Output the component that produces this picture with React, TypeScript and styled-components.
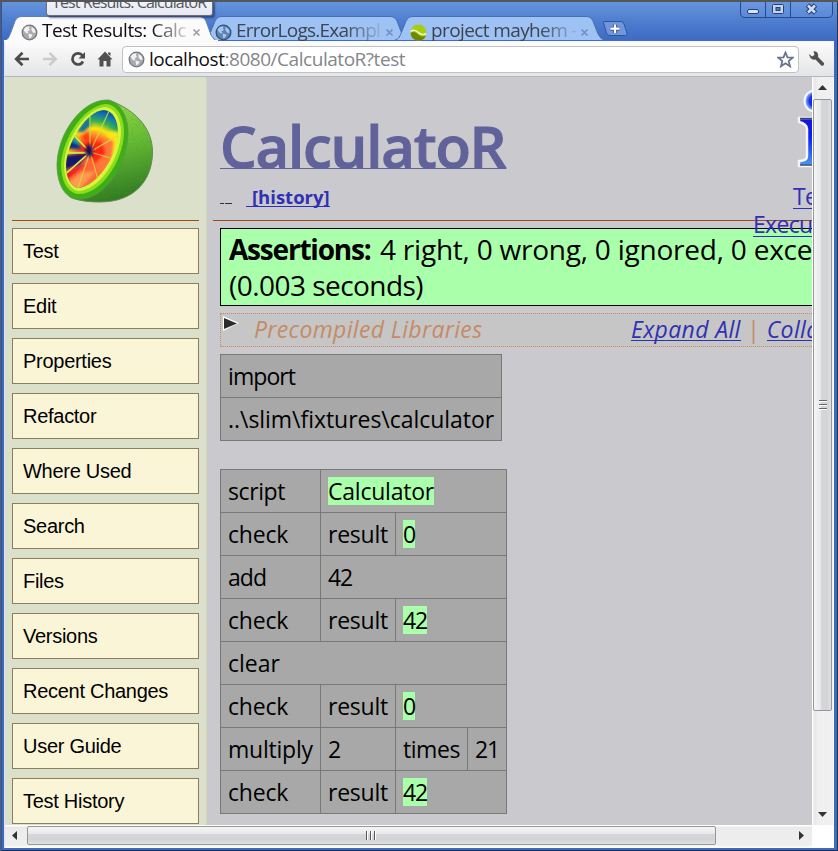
import React from "react";
import styled, { createGlobalStyle, css } from "styled-components";

const GlobalStyle = createGlobalStyle`
  * { box-sizing: border-box; }
  body { margin: 0; overflow: hidden; background: #23262c; }
`;

const ui = `"Open Sans", "Noto Sans", sans-serif`;

/* ---------- window frame ---------- */

const Window = styled.div`
  width: 838px;
  height: 851px;
  display: flex;
  flex-direction: column;
  padding: 0 4px 3px 4px;
  border-top: 2px solid #55565a;
  background: linear-gradient(#6494dd 0, #4a78cc 24px, #3c69c2 41px, #3c6bc4 100%);
  box-shadow: inset 1px 0 #545d70, inset 2px 0 #31549d, inset -1px 0 #2b3344, inset 0 -1px #1f2c4d;
  font-family: ${ui};
  overflow: hidden;
  position: relative;
`;

const TitleBar = styled.header`
  height: 39px;
  flex: none;
  display: flex;
  align-items: flex-end;
  position: relative;
`;

const Tooltip = styled.div`
  position: absolute;
  left: 46px;
  top: -2px;
  width: 167px;
  height: 16px;
  border: 1px solid #6d6f78;
  border-top: 0;
  border-radius: 0 0 3px 3px;
  background: linear-gradient(#f3f4fa, #e6e8f3);
  box-shadow: 2px 2px 2px rgba(20, 30, 70, 0.55);
  overflow: hidden;
  z-index: 3;
  display: flex;
  align-items: flex-end;
  padding: 0 0 4px 5px;
  color: #55565c;
  font-size: 16px;
  line-height: 18px;
  letter-spacing: -0.9px;
  white-space: nowrap;
`;

const TabStrip = styled.div`
  display: flex;
  align-items: flex-end;
`;

const TabBox = styled.div<{ $active?: boolean; $w: number; $pad: number }>`
  position: relative;
  width: ${(p) => p.$w}px;
  height: ${(p) => (p.$active ? 25 : 24)}px;
  margin-bottom: ${(p) => (p.$active ? 0 : 1)}px;
  margin-left: ${(p) => (p.$active ? 0 : -14)}px;
  z-index: ${(p) => (p.$active ? 2 : 1)};
  display: flex;
  align-items: center;
  padding-left: ${(p) => p.$pad}px;
  gap: 4px;
`;

const TabShape = styled.svg`
  position: absolute;
  inset: 0;
  z-index: -1;
  overflow: visible;
`;

const TabTitle = styled.span<{ $ls: number; $w: number; $active?: boolean }>`
  width: ${(p) => p.$w}px;
  overflow: hidden;
  white-space: nowrap;
  font-size: 19px;
  line-height: 26px;
  margin-top: 3px;
  letter-spacing: ${(p) => p.$ls}px;
  color: ${(p) => (p.$active ? "#101014" : "#3c4450")};
  mask-image: linear-gradient(90deg, #000 75%, rgba(0, 0, 0, 0.1) 100%);
`;

const Glyph = styled.svg<{ $top?: number }>`
  flex: none;
  display: block;
  margin-top: ${(p) => p.$top ?? 0}px;
`;

const NewTab = styled.svg`
  margin: 0 0 4px -3px;
`;

const WindowButtons = styled.svg`
  margin-left: auto;
  align-self: flex-start;
  margin-right: 1px;
`;

const Toolbar = styled.nav`
  height: 36px;
  flex: none;
  display: flex;
  align-items: center;
  background: linear-gradient(#fbfbfb, #e4e5e6);
  border-bottom: 1px solid #b5b7bf;
  border-left: 1px solid #dfe6f2;
  border-top: 1px solid #f6f8fc;
  padding: 0 8px 0 9px;
`;

const AddressBar = styled.div`
  width: 677px;
  height: 27px;
  margin-left: 9px;
  border: 1px solid #bfc1c3;
  border-radius: 4px;
  background: #fff;
  display: flex;
  align-items: center;
  padding: 0 4px 0 5px;
`;

const Url = styled.div`
  font-size: 19px;
  line-height: 25px;
  letter-spacing: -0.46px;
  color: #85868a;
  margin: 0 auto 0 4px;
  & b { font-weight: 400; color: #101010; }
`;

/* ---------- page ---------- */

const Viewport = styled.div`
  flex: 1;
  min-height: 0;
  display: grid;
  grid-template-columns: 807px 22px;
  grid-template-rows: 748px 22px;
  background: #fff;
  border-left: 1px solid #dfe2e6;
`;

const Page = styled.div`
  display: grid;
  grid-template-columns: 202px 605px;
  overflow: hidden;
  width: 807px;
  background: #cac9ce;
`;

const Sidebar = styled.aside`
  background: #dae0c9;
  border-right: 1px dotted #c9c9a6;
  padding: 0 7px;
  overflow: hidden;
`;

const LogoArea = styled.div`
  height: 144px;
  border-bottom: 1px solid #a04c10;
  padding: 22px 0 0 44px;
  margin-bottom: 7px;
`;

const NavButton = styled.a`
  display: block;
  height: 46px;
  margin-bottom: 9px;
  padding-left: 10px;
  border: 1px solid #8c7d5d;
  background: #faf5d7;
  font: 20px/44px "Liberation Sans", Arial, sans-serif;
  letter-spacing: -0.28px;
  color: #000;
`;

const Main = styled.main`
  position: relative;
  overflow: hidden;
  padding-left: 6px;
`;

const Header = styled.div`
  height: 144px;
  border-bottom: 1px solid #a04c10;
  padding: 0 0 0 7px;
  overflow: hidden;
`;

const Title = styled.h1`
  display: block;
  width: 286px;
  height: 54px;
  margin: 38px 0 0;
  font-size: 58px;
  font-weight: 600;
  line-height: 61px;
  letter-spacing: -1.2px;
  color: #62629b;
  white-space: nowrap;
  border-bottom: 1px solid #62629b;
  -webkit-text-stroke: 1px #62629b;
`;

const Crumbs = styled.div`
  display: flex;
  margin-top: 18px;
  height: 24px;
`;

const CrumbDash = styled.svg`
  margin: 16px 14px 0 0;
`;

const History = styled.a`
  height: 20px;
  padding-left: 6px;
  border-bottom: 1px solid #3030b4;
  font-size: 18.5px;
  font-weight: 700;
  line-height: 20px;
  color: #3030b4;
`;

const Content = styled.div`
  padding-left: 7px;
`;

const Assertions = styled.div`
  width: 640px;
  height: 78px;
  margin-top: 7px;
  padding: 2px 8px;
  border: 1px solid #000;
  background: #aaffaa;
  font-size: 28px;
  line-height: 36px;
  color: #000;
  white-space: nowrap;
  letter-spacing: -0.22px;
`;

const AssertLabel = styled.b`
  display: inline-block;
  width: 151px;
  letter-spacing: -1.2px;
`;

const AssertTime = styled.div`
  letter-spacing: -0.54px;
`;

const Collapsible = styled.div`
  width: 700px;
  height: 34px;
  margin: 7px 0;
  border: 1px dotted #cc8860;
  background: #c6c6c6;
  display: flex;
  padding-left: 1px;
  color: #c58b66;
  font-size: 23px;
  font-style: italic;
  line-height: 31px;
  letter-spacing: 0.35px;
  white-space: nowrap;
`;

const CollapsibleTitle = styled.span`
  width: 377px;
  margin-left: 15px;
`;

const Link = styled.a`
  height: 27px;
  color: #3030b4;
  border-bottom: 1px solid #3030b4;
`;

const Divider = styled.span`
  font-style: normal;
  width: 26px;
  text-align: center;
`;

const DecisionTable = styled.table<{ $w: number }>`
  width: ${(p) => p.$w}px;
  table-layout: fixed;
  border-collapse: collapse;
  margin-bottom: 28px;
  background: #a8a8a8;
  font-size: 23px;
  line-height: 28px;
  color: #000;
`;

const Row = styled.tr`
  height: 43px;
`;

const Cell = styled.td<{ $ls?: number }>`
  border: 1px solid #787878;
  padding: 0 0 1px 7px;
  letter-spacing: ${(p) => p.$ls ?? -0.22}px;
  white-space: nowrap;
`;

const Pass = styled.span`
  display: block;
  width: fit-content;
  height: 28px;
  background: #aaffaa;
`;

const Execution = styled.div`
  position: absolute;
  top: 14px;
  left: 546px;
  width: 150px;
  color: #3030b4;
  font-size: 23px;
  line-height: 27px;
  white-space: nowrap;
  letter-spacing: -0.7px;
`;

const ExecIcon = styled.svg`
  display: block;
  margin: -1px 0 14px 44px;
`;

const ExecLine = styled.div<{ $indent: number }>`
  width: fit-content;
  height: 26px;
  margin: 0 0 2px ${(p) => p.$indent}px;
  border-bottom: 1px solid #3030b4;
`;

/* ---------- scrollbars ---------- */

const VScroll = styled.div`
  display: flex;
  flex-direction: column;
  align-items: center;
  background: linear-gradient(90deg, #fff 1px, #e6e6e6 2px, #efefef 6px, #f1f1f1);
  border-right: 1px solid #fafafa;
`;

const HScroll = styled.div`
  display: flex;
  align-items: center;
  width: 807px;
  background: linear-gradient(#fff 1px, #e8e8e8 2px, #ededed 6px, #efefef);
  border-bottom: 1px solid #fafafa;
`;

const Thumb = styled.div<{ $vertical?: boolean }>`
  display: flex;
  align-items: center;
  justify-content: center;
  border: 1px solid #979797;
  border-radius: 2px;
  ${(p) =>
    p.$vertical
      ? css`
          width: 19px;
          height: 612px;
          background: linear-gradient(90deg, #f5f5f5, #e9e9eb 38%, #d6d7da 42%, #d2d3d6 75%, #e0e0e2);
        `
      : css`
          width: 689px;
          height: 19px;
          background: linear-gradient(#f5f5f5, #e9e9eb 38%, #d6d7da 42%, #d2d3d6 75%, #e0e0e2);
        `}
`;

const Arrow = styled.svg<{ $m: string }>`
  flex: none;
  margin: ${(p) => p.$m};
`;

/* ---------- drawings ---------- */

const Globe = ({ dim, top }: { dim?: boolean; top?: number }) => (
  <Glyph width="17" height="17" viewBox="0 0 17 17" $top={top}>
    <circle cx="8.5" cy="8.5" r="7.3" fill={dim ? "#5f82b0" : "#a9aaad"} stroke={dim ? "#34506f" : "#77787b"} strokeWidth="1.3" />
    <path d="M2.500 5.500 L5 2.800 L8.500 2.200 L8 4.500 L9 6 L6.500 7.500 L7.500 9 L5.500 9.500 L3.500 7.500Z M10.500 2.800 L13.500 5 L14.800 8.500 L12.500 9 L10.500 6.500Z M7.500 9.500 L11.500 10.500 L10.500 13 L8.500 14.500 L7.800 12Z" fill={dim ? "#a4c8f4" : "#f1f1f2"} />
  </Glyph>
);

const Swirl = () => (
  <Glyph width="17" height="17" viewBox="0 0 17 17" $top={8}>
    <circle cx="8.500" cy="8.500" r="8" fill="#a9cc0c" />
    <path d="M.6 9 Q4 6.500 7.500 10 Q11 14 16 11.500 A8 8 0 0 1 .6 9Z" fill="#6f8700" />
    <path d="M.7 7.500 Q4.500 4.500 8.500 8.500 Q12 12 16.200 9.500" fill="none" stroke="#eef5d8" strokeWidth="1.600" />
  </Glyph>
);

const CloseX = ({ color, top }: { color: string; top?: number }) => (
  <Glyph width="9" height="9" viewBox="0 0 9 9" $top={top}>
    <path d="M1.500 1.500 L7.500 7.500 M7.500 1.500 L1.500 7.500" stroke={color} strokeWidth="1.500" />
  </Glyph>
);

const BrowserTab = (p: { w: number; pad: number; active?: boolean; title: string; ls: number; icon: React.ReactNode; tw: number }) => {
  const h = p.active ? 25 : 24;
  const d = `M0 ${h} C4 ${h - 1} 5 ${h - 4} 7 ${h - 9} L11 5 Q13 .5 18 .5 H${p.w - 19} Q${p.w - 14} .5 ${p.w - 12} 5 L${p.w - 7} ${h - 6} Q${p.w - 4} ${h} ${p.w} ${h}`;
  return (
    <TabBox $w={p.w} $active={p.active} $pad={p.pad}>
      <TabShape width={p.w} height={h}>
        <path d={d} fill={p.active ? "#fbfbfb" : "#9dc2f3"} stroke={p.active ? "#5d7eb8" : "#456fb2"} strokeWidth="1" />
        {p.active && <path d={`M0 ${h} H${p.w}`} stroke="#fbfbfb" strokeWidth="2" />}
      </TabShape>
      {p.icon}
      <TabTitle $ls={p.ls} $w={p.tw} $active={p.active}>{p.title}</TabTitle>
      <CloseX color={p.active ? "#9a9a9a" : "#6c8fbf"} top={8} />
    </TabBox>
  );
};

const LimeLogo = () => (
  <svg width="98" height="107" viewBox="0 0 98 107">
    <defs>
      <linearGradient id="rind" x1=".5" y1="0" x2=".7" y2="1">
        <stop offset="0" stopColor="#96dc45" />
        <stop offset=".45" stopColor="#64bb32" />
        <stop offset="1" stopColor="#2b7420" />
      </linearGradient>
      <radialGradient id="heat" gradientUnits="userSpaceOnUse" cx="36" cy="54" r="46">
        <stop offset="0" stopColor="#e8102c" />
        <stop offset=".22" stopColor="#ff2a10" />
        <stop offset=".38" stopColor="#ff8030" />
        <stop offset=".54" stopColor="#ffe60c" />
        <stop offset=".7" stopColor="#38b050" />
        <stop offset=".88" stopColor="#1070b4" />
        <stop offset="1" stopColor="#10408c" />
      </radialGradient>
      <filter id="soft" x="-20%" y="-20%" width="140%" height="140%"><feGaussianBlur stdDeviation="1.800" /></filter>
      <filter id="peel"><feTurbulence type="fractalNoise" baseFrequency=".45" numOctaves="2" seed="4" /><feColorMatrix values="0 0 0 0 .1  0 0 0 0 .3  0 0 0 0 .05  0 0 0 2.200 -1" /></filter>
      <clipPath id="body"><path d="M52 1 C76 9 97 27 96.500 54 C96 82 78 103 44 103 C30 103 20 101 14 98Z" /></clipPath>
      <clipPath id="face"><path d="M48 11 C57 12 62 21 62 34 C61 58 40 88 22 89 C14 87 10 78 10 65 C12 41 31 12 48 11Z" /></clipPath>
    </defs>
    <path d="M52 1 C76 9 97 27 96.500 54 C96 82 78 103 44 103 C30 103 20 101 14 98Z" fill="url(#rind)" stroke="#648c52" strokeWidth="1" />
    <g clipPath="url(#body)"><rect width="98" height="107" filter="url(#peel)" opacity=".4" /></g>
    <path d="M50 1 C62 1 72 15 72 34 C72 65 48 103 20 100 C8 98 1 84 1 65 C2 34 25 2 50 1Z" fill="#3eae16" stroke="#5d9450" strokeWidth=".8" />
    <path d="M50 5 C61 6 68 17 68 34 C67 63 44 97 21 95 C11 93 5 82 5 65 C7 36 30 6 50 5Z" fill="#8ddd1c" />
    <path d="M49 8 C59 9 65 19 65 34 C64 61 42 92 22 92 C13 90 8 80 8 65 C10 38 31 9 49 8Z" fill="#d6f63c" />
    <g clipPath="url(#face)">
      <rect width="70" height="100" fill="url(#heat)" />
      <g filter="url(#soft)">
        <path d="M52 32 L66 33 L66 55 L54 72 L46 66Z" fill="#ffe818" />
        <path d="M38 56 L50 38 L58 42 L56 62 L44 82 L34 80Z" fill="#ff7838" />
        <path d="M34 50 L46 42 L50 54 L38 66Z" fill="#ff2818" />
        <path d="M34 56 L9 73 L10 96 L30 96 L44 76Z" fill="#ff6534" />
        <path d="M24 74 L12 84 L22 92 L40 72Z" fill="#ff9a50" />
        <path d="M34 54 L9 56 L8 72 L24 66Z" fill="#17176a" />
        <path d="M26 66 L8 74 L10 82 L31 65Z" fill="#f01824" />
        <path d="M26 50 L9 50 L12 34 L20 40Z" fill="#0d2d80" />
        <path d="M24 46 L15 42 L20 37Z" fill="#18a0a0" />
        <path d="M20 33 L32 18 L35 26 L28 33Z" fill="#16709a" />
        <path d="M25 38 L33 32 L34 46Z" fill="#ff3a10" />
      </g>
      <path d="M34 53 V14 M34 53 L54 10 M34 53 L66 34 M34 53 L61 61 M34 53 L44 87 M34 53 L20 95 M34 53 L7 77 M34 53 L8 54 M34 53 L13 31" stroke="#d4e03c" strokeWidth="1.300" fill="none" opacity=".75" />
      <path d="M7 54 H34 M7 77 L30 57 M13 31 L30 49" stroke="#d4f03c" strokeWidth="1.500" />
      <path d="M33 44 L37 50 L36 58 L30 56 L29 50Z" fill="#1d1054" filter="url(#soft)" />
    </g>
  </svg>
);

/* ---------- data ---------- */

const navItems = ["Test", "Edit", "Properties", "Refactor", "Where Used", "Search", "Files", "Versions", "Recent Changes", "User Guide", "Test History"];

type C = { t: string; span?: number; pass?: boolean; ls?: number };
const script: C[][] = [
  [{ t: "script", ls: -0.41 }, { t: "Calculator", span: 3, pass: true }],
  [{ t: "check" }, { t: "result" }, { t: "0", span: 2, pass: true, ls: -1.1 }],
  [{ t: "add", ls: -0.98 }, { t: "42", span: 3, ls: -1.1 }],
  [{ t: "check" }, { t: "result" }, { t: "42", span: 2, pass: true, ls: -1.1 }],
  [{ t: "clear", span: 4, ls: 0 }],
  [{ t: "check" }, { t: "result" }, { t: "0", span: 2, pass: true, ls: -1.1 }],
  [{ t: "multiply" }, { t: "2" }, { t: "times", ls: -0.44 }, { t: "21", ls: -1.1 }],
  [{ t: "check" }, { t: "result" }, { t: "42", span: 2, pass: true, ls: -1.1 }],
];

export default function App() {
  return (
    <Window>
      <GlobalStyle />
      <TitleBar>
        <TabStrip>
          <BrowserTab active w={214} pad={17} title="Test Results: Calc" ls={-0.44} icon={<Globe top={8} />} tw={146} />
          <BrowserTab w={205} pad={11} title="ErrorLogs.Exampl" ls={-0.75} icon={<Globe dim top={8} />} tw={145} />
          <BrowserTab w={210} pad={15} title="project mayhem -" ls={-0.61} icon={<Swirl />} tw={145} />
        </TabStrip>
        <NewTab width="27" height="17" viewBox="0 0 27 17">
          <path d="M1.500 3 Q1 1.500 3 1.500 H19 Q21 1.500 22 4 L25 13 Q25.500 15.500 23.500 15.500 H8 Q5.500 15.500 4.500 13Z" fill="#7196dc" stroke="#2c54a4" />
          <path d="M13 4.500 V13 M8.500 8.700 H17.500" stroke="#35549a" strokeWidth="4" />
          <path d="M13 4.500 V13 M8.500 8.700 H17.500" stroke="#fff" strokeWidth="2.200" />
        </NewTab>
        <WindowButtons width="93" height="17" viewBox="0 0 93 17">
          <path d="M.5 0 V11 Q.5 15.500 5 15.500 H88 Q92.500 15.500 92.500 11 V0 M25.500 0 V15 M50.500 0 V15" fill="rgba(120,160,230,.25)" stroke="#28488a" />
          <rect x="7.500" y="7.500" width="11" height="4" rx="1.500" fill="#d5e2f6" stroke="#28406e" />
          <rect x="32.500" y="2.500" width="11" height="9" rx="1" fill="#c4d5f2" stroke="#28406e" />
          <rect x="36" y="5.500" width="4" height="3" fill="#4a76cc" stroke="#28406e" />
          <path d="M67.500 3 L75.500 11 M75.500 3 L67.500 11" stroke="#28406e" strokeWidth="4.800" />
          <path d="M68 3.500 L75 10.500 M75 3.500 L68 10.500" stroke="#d0def5" strokeWidth="2.600" />
        </WindowButtons>
      </TitleBar>
      <Tooltip>Test Results: CalculatoR</Tooltip>

      <Toolbar>
        <Glyph width="16" height="16" viewBox="0 0 16 16">
          <path d="M8.500 1.800 L2.200 8 L8.500 14.200 M2.500 8 H15" fill="none" stroke="#4b4b4b" strokeWidth="2.700" />
        </Glyph>
        <Glyph width="38" height="16" viewBox="-12 0 38 16">
          <path d="M7.500 1.800 L13.800 8 L7.500 14.200 M13.500 8 H1" fill="none" stroke="#cbcbcb" strokeWidth="2.500" />
        </Glyph>
        <Glyph width="27" height="16" viewBox="-2 0 27 16">
          <path d="M12.500 4.500 A5.600 5.600 0 1 0 13 10.500" fill="none" stroke="#4b4b4b" strokeWidth="2.700" />
          <path d="M15 1 V7.500 H8.500Z" fill="#4b4b4b" />
        </Glyph>
        <Glyph width="18" height="16" viewBox="-2 0 18 16">
          <path d="M8 .5 L15.500 8.500 H13.500 V15.500 H9.500 V10 H6.500 V15.500 H2.500 V8.500 H.5Z M11 1.500 H13.500 V5 L11 3Z" fill="#505050" />
        </Glyph>
        <AddressBar>
          <Globe />
          <Url><b>localhost</b>:8080/CalculatoR?test</Url>
          <Glyph width="17" height="17" viewBox="0 0 17 17">
            <path d="M8.500 1.500 L10.500 6.300 L15.700 6.600 L11.700 10 L13 15.300 L8.500 12.300 L4 15.300 L5.300 10 L1.300 6.600 L6.500 6.300Z" fill="#fff" stroke="#68738c" strokeWidth="1.800" />
          </Glyph>
        </AddressBar>
        <Glyph width="26" height="18" viewBox="-9 0 26 18">
          <path d="M1 4 L4 6.500 L6.500 5 L5.500 1.200 Q10 1 10.200 5.500 L10 7 L16 13 Q16.500 16 13.500 15.800 L7.500 9.500 Q2 10.500 1 4Z" fill="#505050" />
        </Glyph>
      </Toolbar>

      <Viewport>
        <Page>
          <Sidebar>
            <LogoArea><LimeLogo /></LogoArea>
            {navItems.map((n) => <NavButton key={n}>{n}</NavButton>)}
          </Sidebar>
          <Main>
            <Header>
              <Title>CalculatoR</Title>
              <Crumbs>
                <CrumbDash width="12" height="2"><path d="M0 .5 H4 M5 .5 H12" stroke="#333" /></CrumbDash>
                <History>[history]</History>
              </Crumbs>
            </Header>
            <Content>
              <Assertions>
                <AssertLabel>Assertions:</AssertLabel>4 right, 0 wrong, 0 ignored, 0 exceptions
                <AssertTime>(0.003 seconds)</AssertTime>
              </Assertions>
              <Collapsible>
                <Glyph width="17" height="18" viewBox="0 0 17 18">
                  <path d="M1 2 L17 9 L1 17Z" fill="#fff" />
                  <path d="M2 4 L15 9.500 L2 15Z" fill="#2c2c2c" />
                </Glyph>
                <CollapsibleTitle>Precompiled Libraries</CollapsibleTitle>
                <Link>Expand All</Link>
                <Divider>|</Divider>
                <Link>Collapse All</Link>
              </Collapsible>
              <DecisionTable $w={282}>
                <tbody>
                  <Row><Cell $ls={-0.93}>import</Cell></Row>
                  <Row><Cell $ls={-0.04}>..\slim\fixtures\calculator</Cell></Row>
                </tbody>
              </DecisionTable>
              <DecisionTable $w={287}>
                <colgroup>
                  <col width="100" /><col width="75" /><col width="72" /><col width="39" />
                </colgroup>
                <tbody>
                  {script.map((row, i) => (
                    <Row key={i}>
                      {row.map((c, j) => (
                        <Cell key={j} colSpan={c.span} $ls={c.ls}>{c.pass ? <Pass>{c.t}</Pass> : c.t}</Cell>
                      ))}
                    </Row>
                  ))}
                </tbody>
              </DecisionTable>
            </Content>
            <Execution>
              <ExecIcon width="60" height="79" viewBox="0 0 60 79">
                <defs>
                  <linearGradient id="stem" x1="0" y1="0" x2="0" y2="1"><stop offset="0" stopColor="#1414d8" /><stop offset=".4" stopColor="#0a1eff" /><stop offset="1" stopColor="#4c9ce8" /></linearGradient>
                  <radialGradient id="ball"><stop offset="0" stopColor="#0a10ff" /><stop offset=".6" stopColor="#1c30e8" /><stop offset="1" stopColor="#8ab4f0" /></radialGradient>
                </defs>
                <path d="M2 28 H34 V68 H40 V76 H2 V71 Q10 71 10 66 V39 Q10 34 2 32Z" fill="url(#stem)" stroke="#f6f6fa" strokeWidth="2.500" strokeLinejoin="round" />
                <path d="M3 75 H34 M3 28.500 H34" stroke="#384a68" strokeWidth="1.300" />
                <circle cx="18" cy="11" r="11.500" fill="#f6f6fa" />
                <circle cx="18" cy="11" r="9.500" fill="url(#ball)" />
              </ExecIcon>
              <ExecLine $indent={40}>Tests</ExecLine>
              <ExecLine $indent={0}>Executed OK</ExecLine>
            </Execution>
          </Main>
        </Page>
        <VScroll>
          <Arrow $m="8px 0 8px" width="9" height="6"><path d="M0 5 L4.500 0 L9 5Z" fill="#333" /></Arrow>
          <Thumb $vertical>
            <svg width="8" height="10"><path d="M0 1.500 H8 M0 5.500 H8 M0 9.500 H8" stroke="#fff" /><path d="M0 .5 H8 M0 4.500 H8 M0 8.500 H8" stroke="#666" /></svg>
          </Thumb>
          <Arrow $m="auto 0 7px" width="9" height="6"><path d="M0 0 H9 L4.500 5Z" fill="#333" /></Arrow>
        </VScroll>
        <HScroll>
          <Arrow $m="0 10px 0 7px" width="5" height="9"><path d="M5 0 V9 L0 4.500Z" fill="#333" /></Arrow>
          <Thumb>
            <svg width="12" height="9"><path d="M1.500 0 V9 M5.500 0 V9 M9.500 0 V9" stroke="#fff" /><path d="M.5 0 V9 M4.500 0 V9 M8.500 0 V9" stroke="#555" /></svg>
          </Thumb>
          <Arrow $m="0 8px 0 auto" width="5" height="9"><path d="M0 0 V9 L5 4.500Z" fill="#333" /></Arrow>
        </HScroll>
      </Viewport>
    </Window>
  );
}
